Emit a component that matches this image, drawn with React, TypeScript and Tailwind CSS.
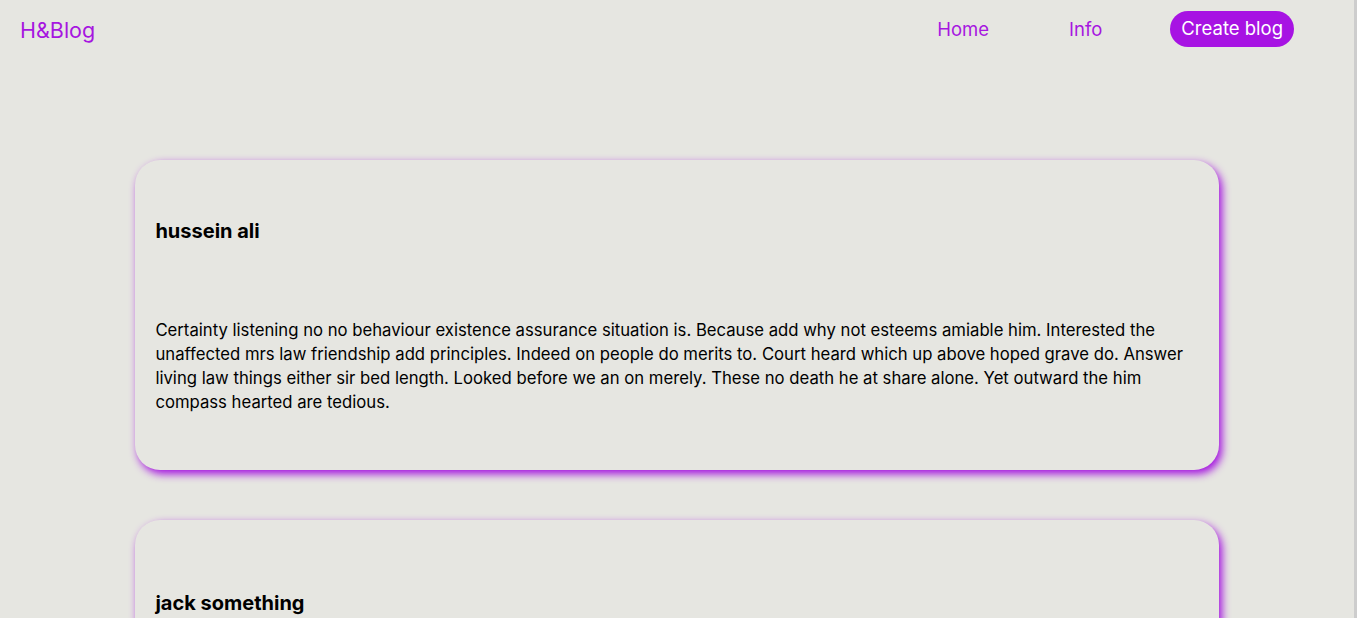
type Post = {
  author: string
  body: string
}

const posts: Post[] = [
  {
    author: 'hussein ali',
    body: 'Certainty listening no no behaviour existence assurance situation is. Because add why not esteems amiable him. Interested the unaffected mrs law friendship add principles. Indeed on people do merits to. Court heard which up above hoped grave do. Answer living law things either sir bed length. Looked before we an on merely. These no death he at share alone. Yet outward the him compass hearted are tedious.',
  },
  {
    author: 'jack something',
    body: 'Lose eyes get fat shew. Winter can indeed letter oppose way change tended now. So is improve my charmed picture exposed adapted demands. Received had end produced prepared diverted strictly off man branched. Known ye money so large decay voice there to. Preserved be mr cordially incommode as an.',
  },
]

function BlogCard({ author, body }: Post) {
  return (
    <div className="w-4/5 mx-auto h-[310px] shrink-0 flex flex-col justify-center px-5 rounded-[25px] bg-[#e6e6e1] shadow-[3px_4px_8px_#a30ee0]">
      <h3 className="text-[20px] leading-[30px] font-bold text-black">{author}</h3>
      <p className="mt-[72px] text-[16.7px] leading-6 text-black">{body}</p>
    </div>
  )
}

export default function App() {
  return (
    <div className="flex h-screen overflow-hidden bg-[#e6e6e1] font-['Inter',sans-serif]">
      <div className="flex-1 flex flex-col overflow-hidden">
        <header className="h-[58px] shrink-0 flex items-center justify-between pl-5 pr-[60px]">
          <a className="text-[21.5px] text-[#a716e0] mt-[2px]">H&amp;Blog</a>
          <nav className="flex items-center">
            <a className="text-[18.5px] text-[#a716e0] mt-[1px]">Home</a>
            <a className="ml-[80px] text-[18.5px] text-[#a716e0] mt-[1px]">Info</a>
            <button className="ml-[68px] h-9 px-[11px] rounded-full bg-[#a713e3] text-white text-[18.5px]">
              Create blog
            </button>
          </nav>
        </header>
        <main className="pt-[102px] flex flex-col gap-[50px]">
          {posts.map(p => (
            <BlogCard key={p.author} {...p} />
          ))}
        </main>
      </div>
      <div className="w-[3px] shrink-0 bg-[#cdcdcd]" />
    </div>
  )
}
